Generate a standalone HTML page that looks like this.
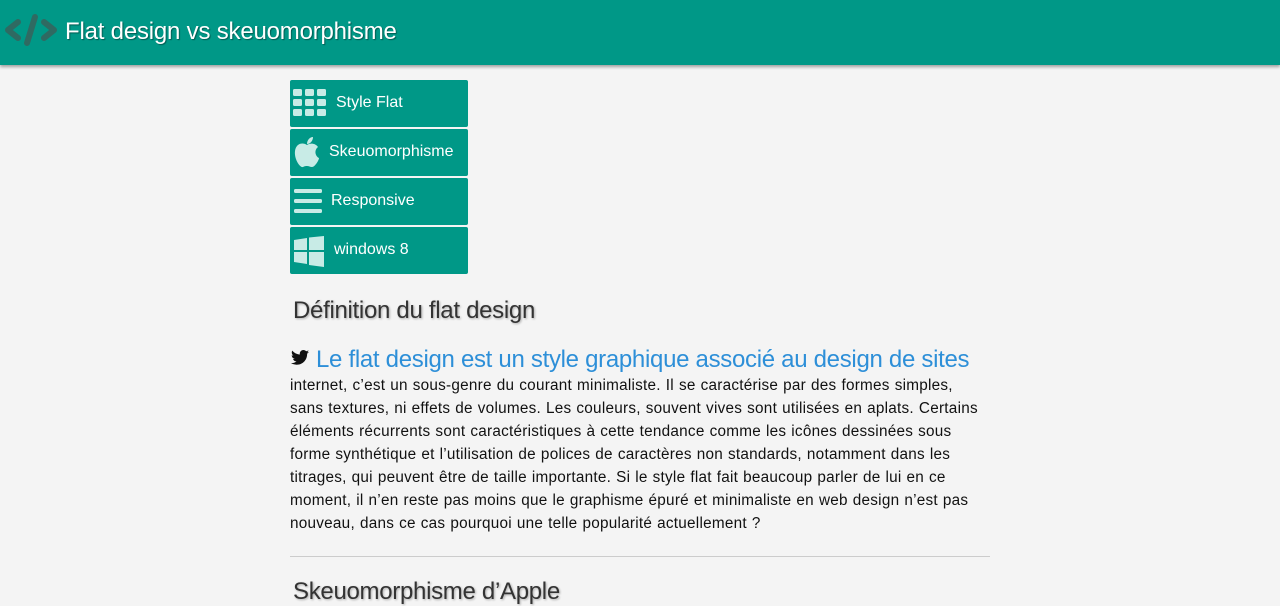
<!DOCTYPE html>
<html><head><meta charset="utf-8"><style>
body{margin:0;background:#f4f4f4;font-family:"Liberation Sans",sans-serif;width:1280px;height:600px;overflow:hidden;position:relative}
.hdr{position:absolute;left:0;top:0;width:1280px;height:65px;background:#009887;box-shadow:0 2px 3px rgba(0,0,0,.35)}
.hdr .t{position:absolute;left:65px;top:18px;font-size:24px;color:#fff;text-shadow:1px 1px 1px rgba(0,0,0,.4);letter-spacing:-0.2px}
.btn{position:absolute;left:290px;width:178px;height:47px;background:#009887;border-radius:2px;color:#fff;font-size:16px}
.btn span{position:absolute;top:14px}
.btn svg{position:absolute}
h2{position:absolute;left:293px;margin:0;font-weight:normal;font-size:24px;color:#333;text-shadow:1px 1px 2px rgba(0,0,0,.3);letter-spacing:-0.3px}
.lead{position:absolute;left:316px;top:346px;font-size:24px;color:#2d8fd8;letter-spacing:-0.3px}
.p{position:absolute;left:290px;top:374px;width:760px;font-size:15.3px;line-height:23px;color:#111;letter-spacing:0.25px;word-spacing:0.5px}
hr{position:absolute;left:290px;width:700px;margin:0;border:0;border-top:1px solid #ccc}
</style></head><body>
<div class="hdr">
<svg style="position:absolute;left:3px;top:13px" width="56" height="34" viewBox="0 0 56 34"><g fill="none" stroke="#2f6a62" stroke-width="6" stroke-linecap="round" stroke-linejoin="round"><path d="M15 9 L5 17 L15 25"/><path d="M41 9 L51 17 L41 25"/><path d="M32 4 L24 30"/></g></svg>
<div class="t">Flat design vs skeuomorphisme</div></div>

<div class="btn" style="top:80px"><svg style="left:3px;top:9px" width="33" height="27" viewBox="0 0 33 27" fill="#c8ebe6"><rect x="0" y="0" width="9" height="7" rx="1.5"/><rect x="12" y="0" width="9" height="7" rx="1.5"/><rect x="24" y="0" width="9" height="7" rx="1.5"/><rect x="0" y="10" width="9" height="7" rx="1.5"/><rect x="12" y="10" width="9" height="7" rx="1.5"/><rect x="24" y="10" width="9" height="7" rx="1.5"/><rect x="0" y="20" width="9" height="7" rx="1.5"/><rect x="12" y="20" width="9" height="7" rx="1.5"/><rect x="24" y="20" width="9" height="7" rx="1.5"/></svg><span style="left:46px">Style Flat</span></div>
<div class="btn" style="top:129px"><svg style="left:4px;top:7px" width="26" height="32" viewBox="0 0 26 32" fill="#c8ebe6"><path d="M13 9 C9 6 2 7 1 15 C0 23 6 32 9 31 C11 30 12 30 13 30 C15 30 16 31 18 31 C21 31 25 24 25 22 C21 20 20 14 24 11 C21 7 16 7 13 9Z"/><path d="M13 8 C13 4 16 1 19 1 C19 5 16 8 13 8Z"/></svg><span style="left:39px">Skeuomorphisme</span></div>
<div class="btn" style="top:178px"><svg style="left:4px;top:11px" width="28" height="24" viewBox="0 0 28 24" fill="#c8ebe6"><rect x="0" y="0" width="28" height="4" rx="1.5"/><rect x="0" y="10" width="28" height="4" rx="1.5"/><rect x="0" y="20" width="28" height="4" rx="1.5"/></svg><span style="left:41px">Responsive</span></div>
<div class="btn" style="top:227px"><svg style="left:4px;top:9px" width="30" height="31" viewBox="0 0 30 31" fill="#c8ebe6"><path d="M0 4 L13 2 V14 H0Z M15 1.5 L30 0 V14 H15Z M0 16 H13 V28 L0 26Z M15 16 H30 V31 L15 29Z"/></svg><span style="left:44px">windows 8</span></div>

<h2 style="top:297px">Définition du flat design</h2>
<svg style="position:absolute;left:291px;top:350px" width="18" height="15" viewBox="0 0 24 20"><path fill="#111" d="M24 2.4c-.9.4-1.8.6-2.8.8 1-.6 1.8-1.6 2.2-2.7-1 .6-2 1-3.1 1.2C19.3.6 18 0 16.6 0c-2.7 0-4.9 2.2-4.9 4.9 0 .4 0 .8.1 1.1C7.7 5.8 4.1 3.9 1.7.9c-.4.7-.7 1.6-.7 2.5 0 1.7.9 3.2 2.2 4.1-.8 0-1.6-.2-2.2-.6v.1c0 2.4 1.7 4.4 3.9 4.8-.4.1-.8.2-1.3.2-.3 0-.6 0-.9-.1.6 2 2.4 3.4 4.6 3.4-1.7 1.3-3.8 2.1-6.1 2.1H0c2.2 1.4 4.8 2.2 7.5 2.2 9.1 0 14-7.5 14-14v-.6c1-.7 1.8-1.6 2.5-2.6z"/></svg>
<div class="lead">Le flat design est un style graphique associé au design de sites</div>
<div class="p">internet, c’est un sous-genre du courant minimaliste. Il se caractérise par des formes simples,<br>sans textures, ni effets de volumes. Les couleurs, souvent vives sont utilisées en aplats. Certains<br>éléments récurrents sont caractéristiques à cette tendance comme les icônes dessinées sous<br>forme synthétique et l’utilisation de polices de caractères non standards, notamment dans les<br>titrages, qui peuvent être de taille importante. Si le style flat fait beaucoup parler de lui en ce<br>moment, il n’en reste pas moins que le graphisme épuré et minimaliste en web design n’est pas<br>nouveau, dans ce cas pourquoi une telle popularité actuellement ?</div>
<hr style="top:556px">
<h2 style="top:578px">Skeuomorphisme d’Apple</h2>
</body></html>
